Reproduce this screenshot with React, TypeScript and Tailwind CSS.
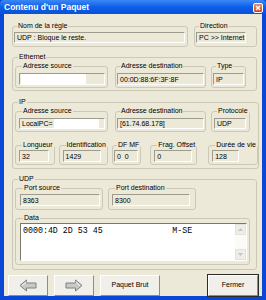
import React from 'react';

const sans = "font-['Liberation_Sans',Arial,sans-serif]";

type GroupProps = { label: string; className?: string; children?: React.ReactNode };

const Group: React.FC<GroupProps> = ({ label, className = '', children }) => (
  <fieldset className={`border border-[#CBC8B8] rounded-[3px] ${className}`}>
    <legend className="ml-[3px] px-[1px] text-[7px] leading-[8px] text-black whitespace-nowrap">{label}</legend>
    {children}
  </fieldset>
);

type FieldProps = { className?: string; children?: React.ReactNode };

const Field: React.FC<FieldProps> = ({ className = '', children }) => (
  <div
    className={`flex items-center border border-t-[#9D9B8C] border-l-[#9D9B8C] border-r-white border-b-white bg-[#ECE9D8] pl-[2px] text-[7px] leading-[9px] text-black whitespace-nowrap overflow-hidden ${className}`}
  >
    {children}
  </div>
);

const Arrow: React.FC<{ dir: 'left' | 'right' }> = ({ dir }) => (
  <svg width="18" height="13" viewBox="0 0 18 13" className={dir === 'right' ? 'scale-x-[-1]' : ''}>
    <polygon
      points="1,6.5 7.5,1 7.5,4 17,4 17,9 7.5,9 7.5,12"
      fill="#C9C9C9"
      stroke="#7E7E7E"
      strokeWidth="1"
      strokeLinejoin="round"
    />
    <polyline points="3,6.5 7.5,2.8" stroke="#F4F4F4" strokeWidth="1" fill="none" />
  </svg>
);

const Button: React.FC<{ className?: string; children?: React.ReactNode }> = ({ className = '', children }) => (
  <button
    className={`h-[21px] flex items-center justify-center bg-[#F0EFE9] border border-t-white border-l-white border-r-[#8F8D80] border-b-[#8F8D80] text-[7px] text-black ${className}`}
  >
    {children}
  </button>
);

export default function App() {
  return (
    <div className={`w-[266px] h-[300px] bg-[#0A47D4] flex flex-col ${sans}`}>
      {/* title bar */}
      <div className="h-[14px] flex items-center justify-between pl-[4px] pr-[3px] bg-gradient-to-b from-[#3A88F4] via-[#0C5EE8] to-[#0A50DA] rounded-t-[4px]">
        <span className="text-white font-bold text-[8.5px] leading-[10px]">Contenu d'un Paquet</span>
        <div className="w-[10px] h-[10px] mt-[2px] rounded-[2px] border border-white bg-gradient-to-b from-[#EC8A64] to-[#D2421C] flex items-center justify-center">
          <svg width="6" height="6" viewBox="0 0 6 6">
            <path d="M1 1 L5 5 M5 1 L1 5" stroke="white" strokeWidth="1.4" />
          </svg>
        </div>
      </div>

      {/* dialog body */}
      <div className="mx-[4px] mb-[4px] flex-1 bg-[#ECE9D8] flex flex-col">
        <div className="pl-[8px] pr-[5px] pt-[8px] flex flex-col">
          {/* rule + direction */}
          <div className="flex items-start">
            <Group label="Nom de la règle" className="w-[176px] pl-[1px] pt-[2px] pb-[3px]">
              <Field className="w-[171px] h-[11px]">UDP : Bloque le reste.</Field>
            </Group>
            <Group label="Direction" className="ml-[6px] w-[63px] pl-[1px] pt-[2px] pb-[3px]">
              <Field className="w-[50px] h-[11px]">PC &gt;&gt; Internet</Field>
            </Group>
          </div>

          {/* Ethernet */}
          <Group label="Ethernet" className="mt-[6px] pl-[2px] pt-[1px] pb-[2px]">
            <div className="flex items-start">
              <Group label="Adresse source" className="w-[93px] pl-[3px] pt-[3px] pb-[2px]">
                <Field className="w-[86px] h-[12px] !pl-[1px]">
                  <div className="w-[65px] h-full bg-white" />
                </Field>
              </Group>
              <Group label="Adresse destination" className="ml-[7px] w-[91px] pl-[1px] pt-[3px] pb-[2px]">
                <Field className="w-[87px] h-[12px]">00:0D:88:6F:3F:8F</Field>
              </Group>
              <Group label="Type" className="ml-[5px] w-[35px] pl-[1px] pt-[3px] pb-[2px]">
                <Field className="w-[31px] h-[12px]">IP</Field>
              </Group>
            </div>
          </Group>

          {/* IP */}
          <Group label="IP" className="mt-[7px] pl-[2px] pt-[1px] pb-[3px]">
            <div className="flex items-start">
              <Group label="Adresse source" className="w-[93px] pl-[3px] pt-[3px] pb-[2px]">
                <Field className="w-[86px] h-[11px]">
                  LocalPC=
                  <div className="ml-[1px] w-[45px] h-full bg-white" />
                </Field>
              </Group>
              <Group label="Adresse destination" className="ml-[7px] w-[91px] pl-[1px] pt-[3px] pb-[2px]">
                <Field className="w-[87px] h-[11px]">[61.74.68.178]</Field>
              </Group>
              <Group label="Protocole" className="ml-[5px] w-[38px] pl-[2px] pt-[3px] pb-[2px]">
                <Field className="w-[32px] h-[11px]">UDP</Field>
              </Group>
            </div>
            <div className="flex items-start mt-[9px]">
              <Group label="Longueur" className="w-[38px] pl-[3px] pt-[1px] pb-[2px]">
                <Field className="w-[30px] h-[12px]">32</Field>
              </Group>
              <Group label="Identification" className="ml-[4px] w-[46px] pl-[3px] pt-[1px] pb-[2px]">
                <Field className="w-[38px] h-[12px]">1429</Field>
              </Group>
              <Group label="DF MF" className="ml-[4px] w-[28px] pl-[1px] pt-[1px] pb-[2px]">
                <Field className="w-[24px] h-[12px]">0&nbsp;&nbsp;0</Field>
              </Group>
              <Group label="Frag. Offset" className="ml-[9px] w-[45px] pl-[3px] pt-[1px] pb-[2px]">
                <Field className="w-[38px] h-[12px]">0</Field>
              </Group>
              <Group label="Durée de vie" className="ml-[11px] w-[46px] pl-[3px] pt-[1px] pb-[2px]">
                <Field className="w-[27px] h-[12px]">128</Field>
              </Group>
            </div>
          </Group>

          {/* UDP */}
          <Group label="UDP" className="mt-[6px] pl-[2px] pt-[1px] pb-[4px]">
            <div className="flex items-start">
              <Group label="Port source" className="w-[88px] pl-[4px] pt-[2px] pb-[3px]">
                <Field className="w-[80px] h-[12px]">8363</Field>
              </Group>
              <Group label="Port destination" className="ml-[5px] w-[88px] pl-[3px] pt-[2px] pb-[3px]">
                <Field className="w-[78px] h-[12px]">8300</Field>
              </Group>
            </div>
            <Group label="Data" className="mt-[4px] w-[235px] pl-[4px] pt-[1px] pb-[3px]">
              <div className="w-[227px] h-[38px] flex border border-t-[#7A786B] border-l-[#7A786B] border-r-white border-b-white bg-white">
                <div className="flex-1 pl-[2px] pt-[2px] font-['Liberation_Mono','Courier_New',monospace] text-[8.3px] leading-[10px] text-black whitespace-pre">
                  {'0000:4D 2D 53 45              M-SE'}
                </div>
                <div className="w-[11px] flex flex-col justify-between bg-[#FAFAF8]">
                  <div className="h-[11px] bg-[#EEEDE6] border border-[#E2E1DA] flex items-center justify-center">
                    <svg width="5" height="3" viewBox="0 0 5 3">
                      <path d="M0 3 L2.5 0 L5 3 Z" fill="#C6C5BE" />
                    </svg>
                  </div>
                  <div className="h-[11px] bg-[#EEEDE6] border border-[#E2E1DA] flex items-center justify-center">
                    <svg width="5" height="3" viewBox="0 0 5 3">
                      <path d="M0 0 L2.5 3 L5 0 Z" fill="#C6C5BE" />
                    </svg>
                  </div>
                </div>
              </div>
            </Group>
          </Group>
        </div>

        {/* buttons */}
        <div className="mt-[5px] px-[4px] flex items-start">
          <Button className="w-[40px]">
            <Arrow dir="left" />
          </Button>
          <Button className="ml-[6px] w-[40px]">
            <Arrow dir="right" />
          </Button>
          <Button className="ml-[6px] w-[60px]">Paquet Brut</Button>
          <Button className="ml-auto w-[50px] outline outline-1 outline-[#2B2B2B]">Fermer</Button>
        </div>
      </div>
    </div>
  );
}
